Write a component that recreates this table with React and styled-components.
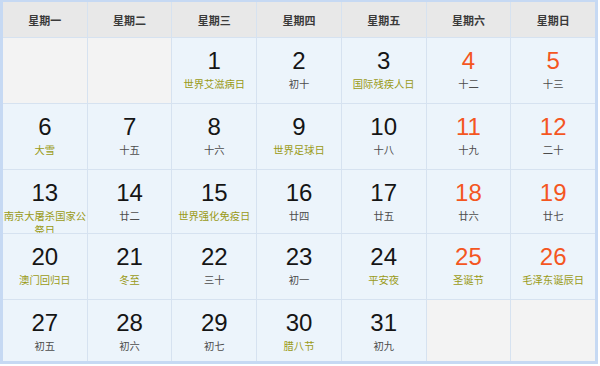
import React from "react";
import styled, { createGlobalStyle } from "styled-components";

const GlobalStyle = createGlobalStyle`
  html, body {
    margin: 0;
    padding: 0;
    background: #ffffff;
  }
  body {
    font-family: "Liberation Sans", "Noto Sans CJK SC", sans-serif;
  }
`;

const WEEKDAYS = ["星期一", "星期二", "星期三", "星期四", "星期五", "星期六", "星期日"];

// [day, note, isFestival]
const WEEKS = [
  [null, null, [1, "世界艾滋病日", true], [2, "初十"], [3, "国际残疾人日", true], [4, "十二"], [5, "十三"]],
  [[6, "大雪", true], [7, "十五"], [8, "十六"], [9, "世界足球日", true], [10, "十八"], [11, "十九"], [12, "二十"]],
  [[13, "南京大屠杀国家公祭日", true], [14, "廿二"], [15, "世界强化免疫日", true], [16, "廿四"], [17, "廿五"], [18, "廿六"], [19, "廿七"]],
  [[20, "澳门回归日", true], [21, "冬至", true], [22, "三十"], [23, "初一"], [24, "平安夜", true], [25, "圣诞节", true], [26, "毛泽东诞辰日", true]],
  [[27, "初五"], [28, "初六"], [29, "初七"], [30, "腊八节", true], [31, "初九"], null, null],
];

const Calendar = styled.div`
  width: 592px;
  border-style: solid;
  border-color: #c6d9f3;
  border-width: 2px 3px 3px 3px;
  display: grid;
  grid-template-columns: repeat(7, 1fr);
  grid-template-rows: 35px 65px 65px 63px 65px 61px;
  gap: 1px;
  background: #d6e2f0;
`;

const HeadCell = styled.div`
  background: #e8e8e8;
  display: flex;
  align-items: center;
  justify-content: center;
  font-family: "Noto Sans CJK SC", sans-serif;
  font-weight: bold;
  font-size: 11px;
  color: #3a3a3a;
`;

const DayCell = styled.div`
  background: ${(p) => (p.$empty ? "#f3f3f3" : "#ecf4fb")};
  overflow: hidden;
  text-align: center;
  padding-top: 10px;
  box-sizing: border-box;
`;

const DayNum = styled.div`
  font-family: "Liberation Sans", sans-serif;
  font-size: 24px;
  line-height: 26px;
  color: ${(p) => (p.$weekend ? "#f4561f" : "#151515")};
`;

const Note = styled.div`
  margin-top: 3px;
  font-family: "Noto Sans CJK SC", sans-serif;
  font-size: 10.3px;
  line-height: 14px;
  color: ${(p) => (p.$festival ? "#9a9a16" : "#4c4c4c")};
`;

export default function App() {
  return (
    <>
      <GlobalStyle />
      <Calendar>
        {WEEKDAYS.map((d) => (
          <HeadCell key={d}>{d}</HeadCell>
        ))}
        {WEEKS.map((week, wi) =>
          week.map((cell, di) =>
            cell ? (
              <DayCell key={`${wi}-${di}`}>
                <DayNum $weekend={di >= 5}>{cell[0]}</DayNum>
                <Note $festival={!!cell[2]}>{cell[1]}</Note>
              </DayCell>
            ) : (
              <DayCell key={`${wi}-${di}`} $empty />
            )
          )
        )}
      </Calendar>
    </>
  );
}
